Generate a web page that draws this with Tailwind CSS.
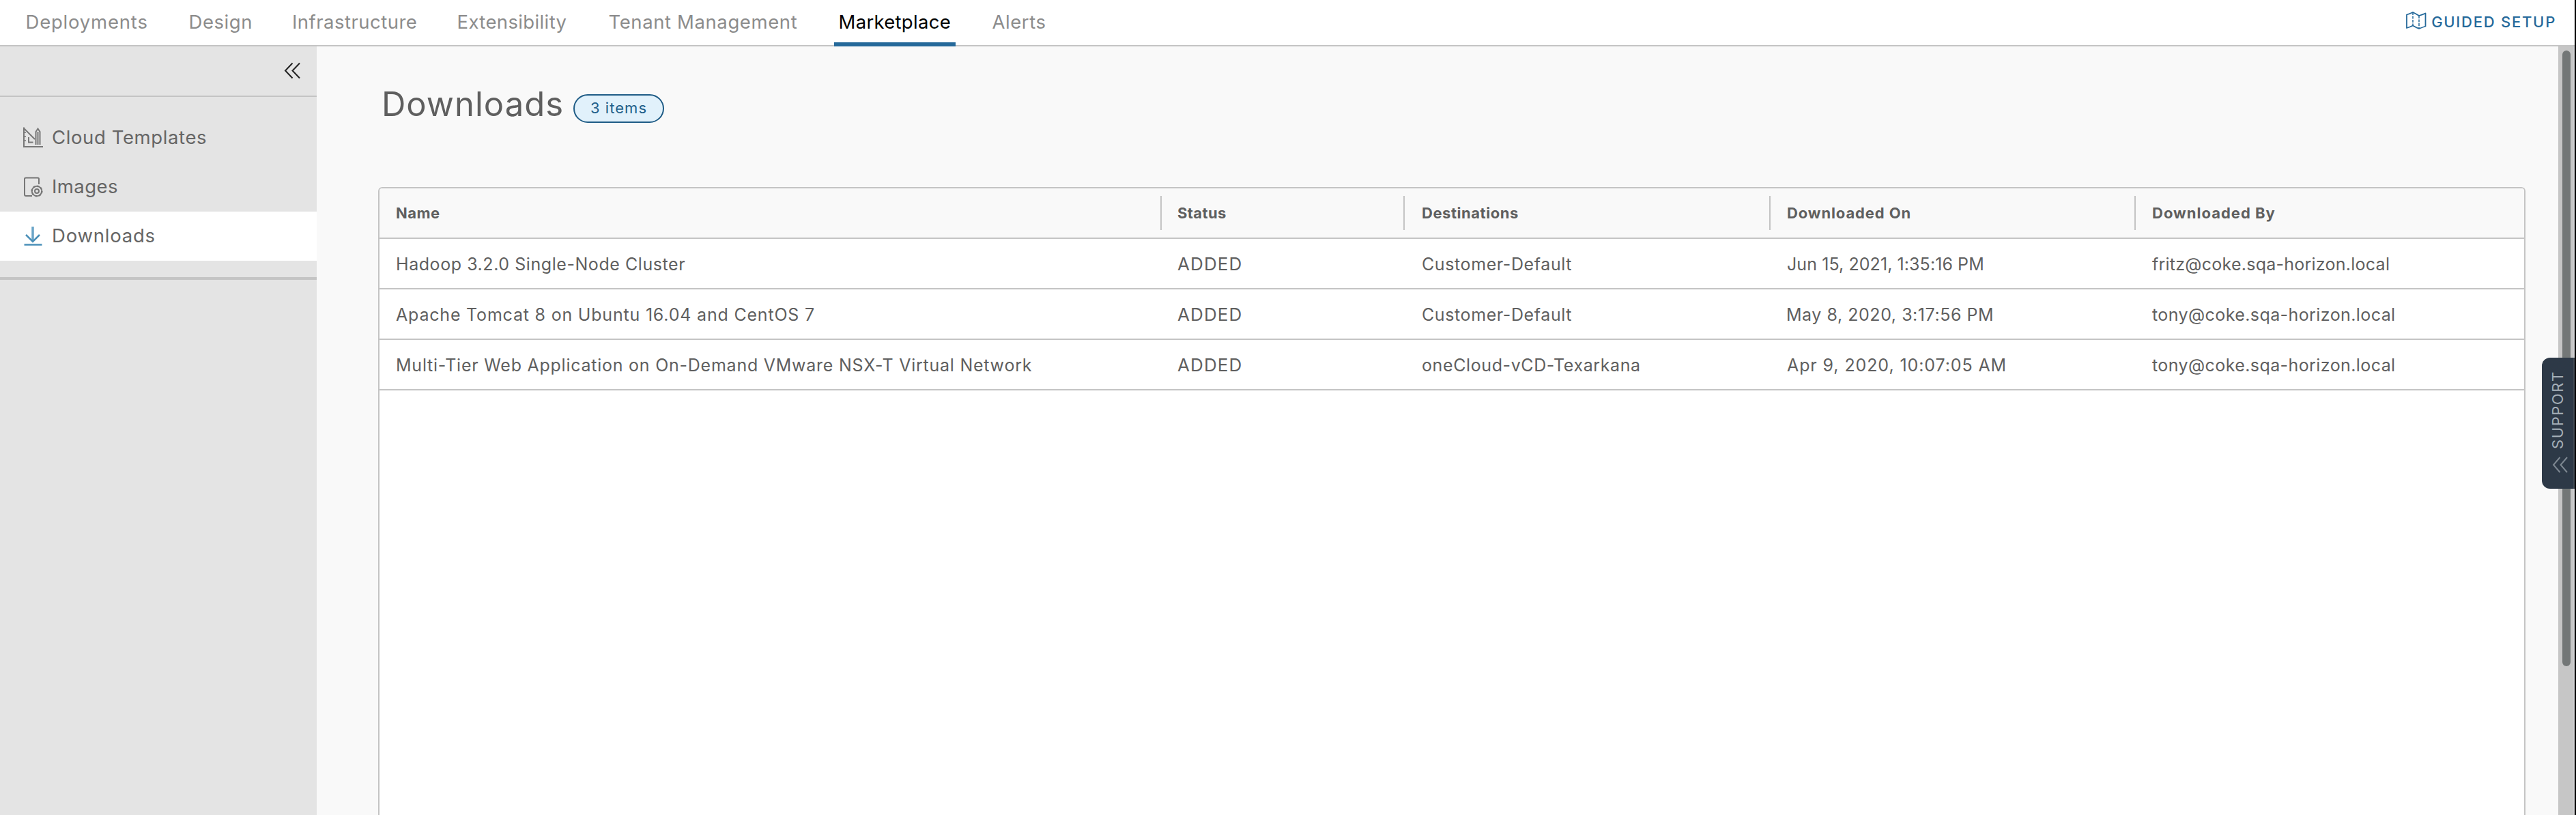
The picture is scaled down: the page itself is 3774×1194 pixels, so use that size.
<!DOCTYPE html>
<html lang="en">
<head>
<meta charset="utf-8">
<title>Downloads</title>
<script src="https://cdn.jsdelivr.net/npm/@tailwindcss/browser@4"></script>
</head>
<body class="flex h-[1194px] w-[3774px] overflow-hidden bg-[#f9f9f9] font-['Inter',sans-serif] whitespace-nowrap text-[#5f5f5f]">
<div class="relative flex w-[3772px] flex-col">
  <header class="flex h-[68px] shrink-0 border-b-2 border-[#c4c4c4] bg-white pl-[37.5px]">
    <nav class="flex text-[27.5px] leading-[64px] text-[#8c8c8c]">
      <a class="w-[239px] tracking-[0.8px]">Deployments</a>
      <a class="w-[151.5px] tracking-[0.55px]">Design</a>
      <a class="w-[241.5px] tracking-[0.48px]">Infrastructure</a>
      <a class="w-[222px] tracking-[0.37px]">Extensibility</a>
      <a class="w-[330px] tracking-[0.6px]">Tenant Management</a>
      <a class="mr-[54px] h-[68px] w-[178px] border-b-6 border-[#25699a] pl-[7px] tracking-[0.3px] text-black">Marketplace</a>
      <a class="tracking-[0.56px]">Alerts</a>
    </nav>
    <a class="mr-[27px] ml-auto flex h-[64px] items-center text-[#25699a]">
      <svg class="mr-[7px] mb-[4px] h-[28px] w-[31px]" viewBox="0 0 31 28" fill="none" stroke="currentColor" stroke-width="1.8" stroke-linejoin="round"><path d="M2 5.500 Q6 4.500 11 2 Q16 4.500 20 7 Q25 5.500 29.500 3.500 V22.500 Q25 24 20 26 Q16 24.500 11 21.500 Q6 24 2 25 Z"/><path stroke-width="1.500" stroke-dasharray="4 1.500" d="M11 2 V21.500 M20 7 V26"/></svg>
      <span class="text-[22px] font-medium tracking-[1.750px]">GUIDED SETUP</span>
    </a>
  </header>

  <div class="flex min-h-0 grow">
    <aside class="flex w-[464px] shrink-0 flex-col bg-[#e4e4e4] text-[27.5px] text-[#666]">
      <div class="flex h-[74px] shrink-0 items-center justify-end border-b-2 border-[#c4c4c4] pr-[23px]">
        <svg class="h-[28px] w-[26px] text-[#222]" viewBox="0 0 26 28" fill="none" stroke="currentColor" stroke-width="2"><path d="M13.500 2.500 L3 13.500 L13.500 24.500 M24 2.500 L13.500 13.500 L24 24.500"/></svg>
      </div>
      <a class="mt-[24px] flex h-[72px] items-center pl-[32px]">
        <svg class="mr-[8px] h-[36px] w-[36px]" viewBox="0 0 36 36" fill="none" stroke="#777" stroke-width="2"><path d="M3 2.500 V31 H31"/><path d="M3 4 L19 20"/><path d="M10 17 V24.500 H16.500"/><path d="M20.500 28 V9 L23.500 4.500 L26.500 9 V28 M23.500 9 V28"/><path d="M3 10 h3 M3 16 h3 M3 22 h3" stroke-width="1.500"/></svg>
        <span class="tracking-[0.61px]">Cloud Templates</span>
      </a>
      <a class="flex h-[72px] items-center pl-[32px]">
        <svg class="mr-[8px] h-[36px] w-[36px]" viewBox="0 0 36 36" fill="none" stroke="#777" stroke-width="2"><path d="M15 31 H6 Q4 31 4 29 V6 Q4 4.500 6 4.500 H23 Q25 4.500 25 6 V14"/><circle cx="22" cy="24" r="7.300"/><circle cx="22" cy="24" r="7.300" stroke-width="2.500" stroke-dasharray="2.400 3.330"/><circle cx="22" cy="24" r="3"/></svg>
        <span class="tracking-[0.44px]">Images</span>
      </a>
      <a class="flex h-[72px] items-center bg-white pl-[32px]">
        <svg class="mr-[8px] h-[36px] w-[36px]" viewBox="0 0 36 36" fill="none" stroke="#4a8fb8"><path stroke-width="3.500" stroke="#6aa5c8" d="M16 4 V25"/><path stroke-width="2.500" d="M6 16 L16 26 L26 16"/><path stroke-width="2.500" d="M3.500 30.500 H29.500"/></svg>
        <span class="tracking-[0.78px]">Downloads</span>
      </a>
      <div class="mt-[24px] h-[4px] shrink-0 bg-[#c4c4c4]"></div>
    </aside>

    <main class="flex w-[3284px] shrink-0 flex-col pl-[90px]">
      <div class="flex h-[206px] shrink-0 items-start pt-[55px] pl-[5px]">
        <h1 class="w-[281px] text-[49px] leading-[60px] tracking-[1px]">Downloads</h1>
        <span class="mt-[15px] flex h-[42px] w-[133px] items-center justify-center rounded-full border-2 border-[#1f5c86] bg-[#e1f1fb] pb-[2px] text-[22px] leading-none tracking-[1.050px] text-[#225f8a]">3 items</span>
      </div>
      <section class="flex w-[3146px] grow flex-col rounded-t-[6px] border-2 border-b-0 border-[#c4c4c4] bg-white">
        <div class="grid h-[74px] shrink-0 grid-cols-[1144px_357px_535px_535px_1fr] items-center rounded-t-[4px] border-b-2 border-[#c4c4c4] bg-[#f9f9f9] text-[22px] leading-[50px] font-bold">
          <div class="pl-[24px] tracking-[0.460px]">Name</div>
          <div class="border-l-2 border-[#c4c4c4] pl-[23px] tracking-[0.380px]">Status</div>
          <div class="-ml-px border-l-2 border-[#c4c4c4] pl-[25px] tracking-[0.540px]">Destinations</div>
          <div class="border-l-2 border-[#c4c4c4] pl-[24px] tracking-[0.880px]">Downloaded On</div>
          <div class="border-l-2 border-[#c4c4c4] pl-[24px] tracking-[1px]">Downloaded By</div>
        </div>
        <div class="grid h-[74px] shrink-0 grid-cols-[1144px_357px_535px_535px_1fr] border-b-2 border-[#c4c4c4] text-[25px] leading-[74px]">
          <div class="pl-[24px] tracking-[0.560px]">Hadoop 3.2.0 Single-Node Cluster</div>
          <div class="pl-[25px] text-[26px] tracking-[1.100px]">ADDED</div>
          <div class="pl-[26px] tracking-[0.600px]">Customer-Default</div>
          <div class="pl-[26px] tracking-[0.080px]">Jun 15, 2021, 1:35:16 PM</div>
          <div class="pl-[26px] tracking-[0.250px]">fritz@coke.sqa-horizon.local</div>
        </div>
        <div class="grid h-[74px] shrink-0 grid-cols-[1144px_357px_535px_535px_1fr] border-b-2 border-[#c4c4c4] text-[25px] leading-[74px]">
          <div class="pl-[24px] tracking-[0.800px]">Apache Tomcat 8 on Ubuntu 16.04 and CentOS 7</div>
          <div class="pl-[25px] text-[26px] tracking-[1.100px]">ADDED</div>
          <div class="pl-[26px] tracking-[0.600px]">Customer-Default</div>
          <div class="pl-[25px] tracking-[0.540px]">May 8, 2020, 3:17:56 PM</div>
          <div class="pl-[26px] tracking-[0.410px]">tony@coke.sqa-horizon.local</div>
        </div>
        <div class="grid h-[74px] shrink-0 grid-cols-[1144px_357px_535px_535px_1fr] border-b-2 border-[#c4c4c4] text-[25px] leading-[74px]">
          <div class="pl-[24px] tracking-[0.755px]">Multi-Tier Web Application on On-Demand VMware NSX-T Virtual Network</div>
          <div class="pl-[25px] text-[26px] tracking-[1.100px]">ADDED</div>
          <div class="pl-[26px] tracking-[0.600px]">oneCloud-vCD-Texarkana</div>
          <div class="pl-[26px] tracking-[0.900px]">Apr 9, 2020, 10:07:05 AM</div>
          <div class="pl-[26px] tracking-[0.410px]">tony@coke.sqa-horizon.local</div>
        </div>
      </section>
    </main>

    <div class="flex w-[24px] shrink-0 border-r-2 border-[#d0d0d2] bg-[#c6c6c6] pt-[6px] pl-[6px]">
      <div class="h-[902px] w-[12px] rounded-full bg-[#737777]"></div>
    </div>
  </div>

  <div class="absolute top-[524px] right-0 flex h-[192px] w-[48px] flex-col items-center rounded-l-[12px] border-r-2 border-[#434b54] bg-[#2d3947] pt-[18px]">
    <span class="h-[116px] rotate-180 text-[22px] leading-[28px] tracking-[1.570px] text-[#a5afb8] [writing-mode:vertical-rl]">SUPPORT</span>
    <svg class="mt-[10px] ml-[6px] h-[26px] w-[26px]" viewBox="0 0 26 26" fill="none" stroke="#7d8791" stroke-width="2"><path d="M13.500 2 L4 13 L13.500 24 M24 2 L14.500 13 L24 24"/></svg>
  </div>
</div>
<div class="w-[2px] bg-black"></div>
</body>
</html>
